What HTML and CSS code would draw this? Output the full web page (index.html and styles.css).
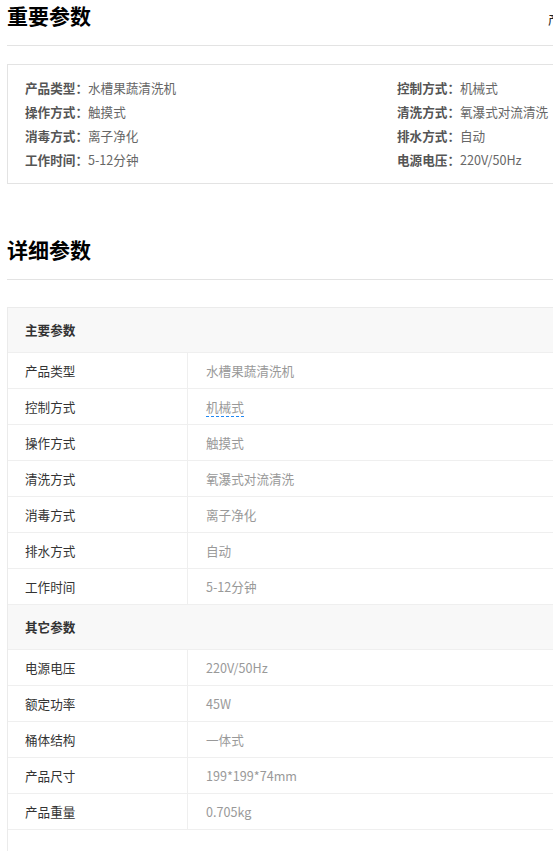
FILE: index.html
```html
<!DOCTYPE html>
<html lang="zh-CN">
<head>
<meta charset="utf-8">
<title>参数</title>
<link rel="stylesheet" href="styles.css">
</head>
<body>
<div class="page">
  <section class="block">
    <div class="block-head">
      <h2 class="title">重要参数</h2>
      <a class="head-link">产品纠错</a>
    </div>
    <div class="key-box">
      <div class="key-col">
        <p class="key-row"><span class="k">产品类型：</span><span class="v">水槽果蔬清洗机</span></p>
        <p class="key-row"><span class="k">操作方式：</span><span class="v">触摸式</span></p>
        <p class="key-row"><span class="k">消毒方式：</span><span class="v">离子净化</span></p>
        <p class="key-row"><span class="k">工作时间：</span><span class="v">5-12分钟</span></p>
      </div>
      <div class="key-col">
        <p class="key-row"><span class="k">控制方式：</span><span class="v">机械式</span></p>
        <p class="key-row"><span class="k">清洗方式：</span><span class="v">氧瀑式对流清洗</span></p>
        <p class="key-row"><span class="k">排水方式：</span><span class="v">自动</span></p>
        <p class="key-row"><span class="k">电源电压：</span><span class="v">220V/50Hz</span></p>
      </div>
    </div>
  </section>

  <section class="block block-detail">
    <div class="block-head">
      <h2 class="title">详细参数</h2>
    </div>
    <div class="spec-table">
      <div class="group-head">主要参数</div>
      <div class="row"><div class="c-label">产品类型</div><div class="c-value">水槽果蔬清洗机</div></div>
      <div class="row"><div class="c-label">控制方式</div><div class="c-value"><span class="dashed">机械式</span></div></div>
      <div class="row"><div class="c-label">操作方式</div><div class="c-value">触摸式</div></div>
      <div class="row"><div class="c-label">清洗方式</div><div class="c-value">氧瀑式对流清洗</div></div>
      <div class="row"><div class="c-label">消毒方式</div><div class="c-value">离子净化</div></div>
      <div class="row"><div class="c-label">排水方式</div><div class="c-value">自动</div></div>
      <div class="row"><div class="c-label">工作时间</div><div class="c-value">5-12分钟</div></div>
      <div class="group-head">其它参数</div>
      <div class="row"><div class="c-label">电源电压</div><div class="c-value">220V/50Hz</div></div>
      <div class="row"><div class="c-label">额定功率</div><div class="c-value">45W</div></div>
      <div class="row"><div class="c-label">桶体结构</div><div class="c-value">一体式</div></div>
      <div class="row"><div class="c-label">产品尺寸</div><div class="c-value">199*199*74mm</div></div>
      <div class="row"><div class="c-label">产品重量</div><div class="c-value">0.705kg</div></div>
      <div class="table-foot"></div>
    </div>
  </section>
</div>
</body>
</html>
```

FILE: styles.css
```css
html, body {
  margin: 0;
  padding: 0;
  background: #fff;
  overflow: hidden;
}
body {
  font-family: "Noto Sans CJK SC", "Liberation Sans", sans-serif;
  color: #333;
}
.page {
  width: 1100px;
  padding-left: 7px;
}
.block-head {
  display: grid;
  grid-template-columns: 541px auto;
  align-items: baseline;
  border-bottom: 1px solid #e3e3e3;
  padding-bottom: 15px;
}
.title {
  margin: 0;
  font-size: 21px;
  line-height: 30px;
  font-weight: 700;
  color: #000;
}
.head-link {
  font-size: 13px;
  color: #222;
}
.key-box {
  margin-top: 18px;
  border: 1px solid #e3e3e3;
  padding: 11px 0 11px 17px;
  display: grid;
  grid-template-columns: 372px 372px;
}
.key-row {
  margin: 0;
  font-size: 12.6px;
  line-height: 24px;
  white-space: nowrap;
}
.key-row .k {
  font-weight: 700;
  color: #555;
}
.key-row .v {
  color: #666;
}
.block-detail {
  margin-top: 50px;
}
.spec-table {
  margin-top: 27px;
  border: 1px solid #ebebeb;
  border-bottom: none;
}
.group-head {
  height: 44px;
  line-height: 44px;
  padding-left: 17px;
  background: #f8f8f8;
  border-bottom: 1px solid #efefef;
  font-size: 12.6px;
  font-weight: 700;
  color: #333;
}
.row {
  display: grid;
  grid-template-columns: 180px 1fr;
  height: 35px;
  border-bottom: 1px solid #efefef;
  font-size: 12.6px;
  line-height: 35px;
}
.c-label {
  padding-left: 17px;
  color: #333;
  border-right: 1px solid #efefef;
}
.c-value {
  padding-left: 18px;
  color: #999;
}
.dashed {
  border-bottom: 1px dashed #1e88f5;
  line-height: 18px;
  display: inline-block;
}
.table-foot {
  height: 40px;
}
```
